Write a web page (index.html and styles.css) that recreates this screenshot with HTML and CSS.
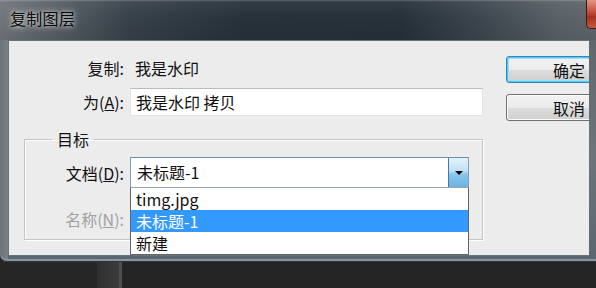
FILE: index.html
```html
<!DOCTYPE html>
<html lang="zh-CN">
<head>
<meta charset="utf-8">
<title>复制图层</title>
<link rel="stylesheet" href="styles.css">
</head>
<body>
<div class="screen">
  <div class="window">
    <div class="titlebar">
      <span class="title">复制图层</span>
      <span class="close"></span>
    </div>
    <div class="client">
      <div class="main">
        <div class="row first">
          <span class="label">复制:</span>
          <span class="value">我是水印</span>
        </div>
        <div class="row">
          <span class="label">为(<u>A</u>):</span>
          <span class="input">我是水印 拷贝</span>
        </div>
        <fieldset class="group">
          <legend class="legend">目标</legend>
          <div class="group-body">
            <div class="row">
              <span class="label">文档(<u>D</u>):</span>
              <div class="combo">
                <span class="combo-text">未标题-1</span>
                <span class="combo-btn"><span class="arrow"></span></span>
                <ul class="list">
                  <li>timg.jpg</li>
                  <li class="selected">未标题-1</li>
                  <li>新建</li>
                </ul>
              </div>
            </div>
            <div class="row second">
              <span class="label disabled">名称(<u>N</u>):</span>
              <span class="blank"></span>
            </div>
          </div>
        </fieldset>
      </div>
      <div class="buttons">
        <button class="btn default">确定</button>
        <button class="btn">取消</button>
      </div>
    </div>
  </div>
  <div class="desk">
    <span class="desk-left"></span>
    <span class="desk-bar"></span>
    <span class="desk-line"></span>
    <span class="desk-rest"></span>
  </div>
</div>
</body>
</html>
```

FILE: styles.css
```css
html, body {
  margin: 0;
  padding: 0;
  background: #262626;
  overflow: hidden;
}

.screen {
  width: 596px;
  height: 288px;
  overflow: hidden;
  font-family: "Noto Sans CJK SC", "Noto Sans", sans-serif;
  font-size: 16px;
  color: #111111;
}

.window {
  width: 612px;
  height: 262px;
  box-sizing: border-box;
  padding: 0 0 6px 8px;
  border-radius: 0 0 7px 7px;
  background:
    linear-gradient(to right, #6d7379 0, #7a8086 8px, transparent 8px),
    linear-gradient(to bottom, #5b6268 0, #6d747a 60%, #5b6670 100%);
  box-shadow: inset 0 -1px 0 #2e3439, inset 0 -3px 0 #8796a0;
  display: flex;
  flex-direction: column;
}

.titlebar {
  height: 40px;
  margin-left: -8px;
  display: flex;
  align-items: flex-start;
  justify-content: space-between;
  background:
    linear-gradient(to bottom, rgba(255,255,255,0.25) 0, rgba(255,255,255,0.05) 2px, transparent 18px, rgba(0,0,0,0.08) 40px),
    linear-gradient(to right, #70767b 0, #5a6167 50px, #37414a 130px, #27323c 240px, #26313b 400px, #3d464f 480px, #5a6167 560px, #62686d 612px);
}

.title {
  margin: 8px 0 0 10px;
  font-size: 16px;
  line-height: 20px;
  color: #0a0a0a;
  text-shadow: 0 0 4px rgba(255,255,255,0.8), 0 0 8px rgba(255,255,255,0.5);
  letter-spacing: 0.3px;
}

.close {
  width: 30px;
  height: 28px;
  margin-right: -6px;
  border-radius: 0 0 5px 5px;
  border: 1px solid #3b1a15;
  border-top: none;
  background: linear-gradient(to bottom, #e39585 0, #c8523f 40%, #a5321f 60%, #c25a3c 100%);
}

.client {
  width: 580px;
  height: 214px;
  border: 1px solid #69737b;
  border-right: none;
  background: #ececec;
  display: flex;
}

.main {
  width: 474px;
  flex: none;
}

.row {
  display: flex;
  align-items: center;
  gap: 6px;
}

.label {
  width: 115px;
  flex: none;
  text-align: right;
  line-height: 22px;
  white-space: nowrap;
}

.row.first {
  margin-top: 15px;
  height: 24px;
}

.value {
  padding-left: 5px;
  line-height: 22px;
}

.input {
  margin-top: 8px;
  box-sizing: border-box;
  width: 353px;
  height: 28px;
  padding-left: 5px;
  line-height: 26px;
  background: #ffffff;
  border: 1px solid #e2e6ea;
  border-top-color: #b7bcc1;
}

.row:nth-child(2) .label { margin-top: 8px; }

.group {
  margin: 13px 0 0 15px;
  padding: 0;
  width: 459px;
  box-sizing: border-box;
  border: 1px solid #c4c4c4;
  box-shadow: inset 1px 1px 0 #ffffff, 1px 1px 0 #ffffff;
  height: 111px;
}

.legend {
  margin-left: 27px;
  padding: 0 5px;
  line-height: 20px;
  font-size: 16px;
}

.group-body {
  padding: 8px 0 0 0;
}

.group .label {
  width: 99px;
}

.combo {
  position: relative;
  box-sizing: border-box;
  width: 339px;
  height: 31px;
  display: flex;
  align-items: stretch;
  background: #ffffff;
  border: 1px solid #7c9fc2;
  border-top-color: #6d8db0;
}

.combo-text {
  flex: 1;
  padding-left: 6px;
  line-height: 29px;
}

.combo-btn {
  width: 20px;
  box-sizing: border-box;
  border-left: 1px solid #3d7bad;
  background: linear-gradient(to bottom, #e3f3fc 0, #bfe0f5 45%, #8ac6ec 55%, #6db3e3 100%);
  display: flex;
  align-items: center;
  justify-content: center;
}

.arrow {
  width: 0;
  height: 0;
  border-left: 4px solid transparent;
  border-right: 4px solid transparent;
  border-top: 4px solid #000000;
}

.list {
  position: absolute;
  top: 29px;
  left: -1px;
  width: 339px;
  box-sizing: border-box;
  margin: 0;
  padding: 0;
  list-style: none;
  background: #ffffff;
  border: 1px solid #646464;
  border-top-color: #9aa6b2;
  z-index: 5;
}

.list li {
  height: 22px;
  line-height: 22px;
  padding-left: 5px;
}

.list li.selected {
  background: #3399ff;
  color: #ffffff;
}

.row.second {
  margin-top: 16px;
  height: 22px;
}

.disabled {
  color: #a2a2a2;
}

.blank {
  width: 339px;
  height: 22px;
}

.buttons {
  flex: 1;
  overflow: hidden;
  display: flex;
  flex-direction: column;
  align-items: flex-start;
  padding: 15px 0 0 23px;
  gap: 11px;
}

.btn {
  flex: none;
  width: 126px;
  height: 27px;
  box-sizing: border-box;
  border: 1px solid #707070;
  border-radius: 3px;
  background: linear-gradient(to bottom, #f2f2f2 0, #ebebeb 50%, #dddddd 51%, #cfcfcf 100%);
  box-shadow: inset 0 0 0 1px #fcfcfc;
  font-family: "Noto Sans CJK SC", "Noto Sans", sans-serif;
  font-size: 16px;
  color: #111111;
  padding: 0;
  line-height: 24px;
}

.btn.default {
  border-color: #3c7fb1;
  box-shadow: inset 0 0 0 1px #48d0f8, inset 0 0 0 2px #9fdcf6;
}

.desk {
  height: 26px;
  display: flex;
}

.desk-left {
  width: 97px;
  background: #262626;
}

.desk-bar {
  width: 22px;
  background: linear-gradient(to right, #2f2f2f, #3c3c3c);
}

.desk-line {
  width: 3px;
  background: #4f4f4f;
}

.desk-rest {
  flex: 1;
  background: #252525;
}
```
